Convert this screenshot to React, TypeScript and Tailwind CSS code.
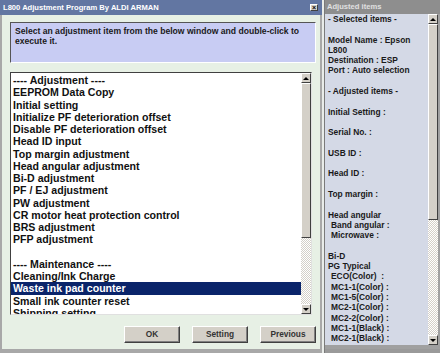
const listItems = [
  "---- Adjustment ----",
  "EEPROM Data Copy",
  "Initial setting",
  "Initialize PF deterioration offset",
  "Disable PF deterioration offset",
  "Head ID input",
  "Top margin adjustment",
  "Head angular adjustment",
  "Bi-D adjustment",
  "PF / EJ adjustment",
  "PW adjustment",
  "CR motor heat protection control",
  "BRS adjustment",
  "PFP adjustment",
  "",
  "---- Maintenance ----",
  "Cleaning/Ink Charge",
  "Waste ink pad counter",
  "Small ink counter reset",
  "Shipping setting",
];

// [text, indented]
const infoLines: [string, boolean][] = [
  ["- Selected items -", false],
  ["", false],
  ["Model Name : Epson", false],
  ["L800", false],
  ["Destination : ESP", false],
  ["Port : Auto selection", false],
  ["", false],
  ["- Adjusted items -", false],
  ["", false],
  ["Initial Setting :", false],
  ["", false],
  ["Serial No. :", false],
  ["", false],
  ["USB ID :", false],
  ["", false],
  ["Head ID :", false],
  ["", false],
  ["Top margin :", false],
  ["", false],
  ["Head angular", false],
  ["Band angular :", true],
  ["Microwave :", true],
  ["", false],
  ["Bi-D", false],
  ["PG Typical", false],
  ["ECO(Color)  :", true],
  ["MC1-1(Color) :", true],
  ["MC1-5(Color) :", true],
  ["MC2-1(Color) :", true],
  ["MC2-2(Color) :", true],
  ["MC1-1(Black) :", true],
  ["MC2-1(Black) :", true],
];

const ArrowBtn = ({ up }: { up?: boolean }) => (
  <div className="flex h-[10px] shrink-0 items-center justify-center border border-t-white border-l-white border-r-[#404040] border-b-[#404040] bg-[#d4d0c8]">
    {up ? (
      <div className="h-0 w-0 border-x-[3px] border-b-[3px] border-x-transparent border-b-black" />
    ) : (
      <div className="h-0 w-0 border-x-[3px] border-t-[3px] border-x-transparent border-t-black" />
    )}
  </div>
);

const ScrollBar = ({ thumb }: { thumb: number }) => (
  <div className="flex w-[10px] shrink-0 flex-col">
    <ArrowBtn up />
    <div
      className="shrink-0 border border-t-white border-l-white border-r-[#404040] border-b-[#404040] bg-[#d4d0c8]"
      style={{ height: thumb }}
    />
    <div className="flex-1 bg-[#ece9e4] bg-[repeating-conic-gradient(#d4d0c8_0_25%,#ffffff_0_50%)] bg-[length:2px_2px]" />
    <ArrowBtn />
  </div>
);

const WinButton = ({ label }: { label: string }) => (
  <button className="h-[17px] w-[56px] border border-t-white border-l-white border-r-[#404040] border-b-[#404040] bg-[#d4d0c8] text-[8.3px] font-bold text-[#333] shadow-[inset_-1px_-1px_0_#808080]">
    {label}
  </button>
);

export default function App() {
  return (
    <div className="flex h-[353px] w-[440px] overflow-hidden bg-[#9a9a9a] font-['Liberation_Sans',Arial,sans-serif]">
      {/* main window */}
      <div className="flex w-[322px] shrink-0 flex-col bg-[#e7f0e5]">
        <div className="flex h-[15px] shrink-0 items-center justify-between bg-[#6276a2] pl-[3px] pr-[4px]">
          <span className="text-[7.6px] font-bold leading-none text-white">
            L800 Adjustment Program By ALDI ARMAN
          </span>
          <div className="flex h-[7px] w-[8px] items-center justify-center border border-t-white border-l-white border-r-[#404040] border-b-[#404040] bg-[#d4d0c8] text-[7px] font-bold leading-none text-black">
            ×
          </div>
        </div>
        <div className="flex flex-1 flex-col border-b-[4px] border-l-[2px] border-r-[2px] border-[#a8a8a8] pl-[8px] pr-[4px]">
          <div className="mt-[7px] h-[41px] border border-t-[#555] border-l-[#555] border-r-white border-b-white bg-[#c8ccf3] px-[4px] pt-[3px] text-[8.6px] font-bold leading-[10px] text-[#1a1a1a]">
            Select an adjustment item from the below window and double-click to
            <br />
            execute it.
          </div>
          <div className="mt-[9px] mr-[4px] flex h-[243px] border border-t-[#404040] border-l-[#404040] border-r-[#e0e0e0] border-b-[#e0e0e0] bg-white">
            <div className="flex-1 overflow-hidden pt-[1px] text-[10.6px] font-bold leading-[12.25px] text-[#111]">
              {listItems.map((item, i) => (
                <div
                  key={i}
                  className={
                    item === "Waste ink pad counter"
                      ? "h-[12.25px] whitespace-pre bg-[#0a246a] pl-[2px] text-white"
                      : "h-[12.25px] whitespace-pre pl-[2px]"
                  }
                >
                  {item}
                </div>
              ))}
            </div>
            <ScrollBar thumb={155} />
          </div>
          <div className="mt-[11px] flex gap-[12px] pl-[114px]">
            <WinButton label="OK" />
            <WinButton label="Setting" />
            <WinButton label="Previous" />
          </div>
        </div>
      </div>
      {/* gap strip */}
      <div className="w-[2px] shrink-0 bg-[#e9ece9]" />
      {/* side panel */}
      <div className="flex flex-1 flex-col border-l border-[#7a7a7a]">
        <div className="flex h-[14px] shrink-0 items-center bg-[#8e8e8e] pl-[2px] text-[7.6px] font-bold text-[#e0e0e0]">
          Adjusted items
        </div>
        <div className="flex h-[335px] border-r-[2px] border-b-[4px] border-[#a0a0a0] bg-[#d4d9e6]">
          <div className="flex-1 overflow-hidden pl-[3px] text-[8.4px] font-bold leading-[10.3px] text-[#1a1a1a]">
            {infoLines.map(([t, ind], i) => (
              <div key={i} className={ind ? "h-[10.3px] whitespace-pre pl-[3px]" : "h-[10.3px] whitespace-pre"}>
                {t}
              </div>
            ))}
          </div>
          <ScrollBar thumb={196} />
        </div>
      </div>
    </div>
  );
}
